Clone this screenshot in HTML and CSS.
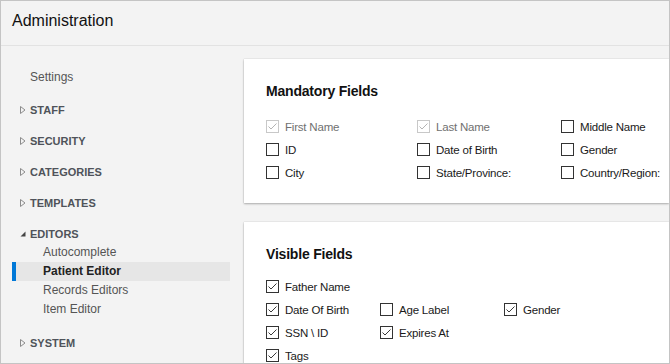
FILE: index.html
```html
<!DOCTYPE html>
<html lang="en">
  <head>
    <meta charset="UTF-8" />
    <title>Administration</title>
    <link rel="stylesheet" href="styles.css">
  </head>
  <body>
    <div class="window">
      <header class="titlebar">Administration</header>

      <div class="body">
        <nav class="sidebar">
          <div class="settings">Settings</div>

          <div class="group">
            <div class="group-head">
              <svg class="caret" viewBox="0 0 6 8"><path d="M0.5 0.5L5 4L0.5 7.5Z" /></svg>
              STAFF
            </div>
          </div>
          <div class="group">
            <div class="group-head">
              <svg class="caret" viewBox="0 0 6 8"><path d="M0.5 0.5L5 4L0.5 7.5Z" /></svg>
              SECURITY
            </div>
          </div>
          <div class="group">
            <div class="group-head">
              <svg class="caret" viewBox="0 0 6 8"><path d="M0.5 0.5L5 4L0.5 7.5Z" /></svg>
              CATEGORIES
            </div>
          </div>
          <div class="group">
            <div class="group-head">
              <svg class="caret" viewBox="0 0 6 8"><path d="M0.5 0.5L5 4L0.5 7.5Z" /></svg>
              TEMPLATES
            </div>
          </div>
          <div class="group open">
            <div class="group-head">
              <svg class="caret" viewBox="0 0 6 8"><path d="M5.5 1.5V6.5H0.5Z" /></svg>
              EDITORS
            </div>
            <ul class="sub">
              <li>Autocomplete</li>
              <li class="active">Patient Editor</li>
              <li>Records Editors</li>
              <li>Item Editor</li>
            </ul>
          </div>
          <div class="group">
            <div class="group-head">
              <svg class="caret" viewBox="0 0 6 8"><path d="M0.5 0.5L5 4L0.5 7.5Z" /></svg>
              SYSTEM
            </div>
          </div>
        </nav>

        <main class="content">
          <section class="panel mandatory">
            <h2>Mandatory Fields</h2>
            <div class="fields">
              <label class="field disabled"><span class="box"><svg viewBox="0 0 11 11"><polyline points="1.5,5.5 4,8 9.5,2.5" /></svg></span>First Name</label>
              <label class="field disabled"><span class="box"><svg viewBox="0 0 11 11"><polyline points="1.5,5.5 4,8 9.5,2.5" /></svg></span>Last Name</label>
              <label class="field"><span class="box"></span>Middle Name</label>

              <label class="field"><span class="box"></span>ID</label>
              <label class="field"><span class="box"></span>Date of Birth</label>
              <label class="field"><span class="box"></span>Gender</label>

              <label class="field"><span class="box"></span>City</label>
              <label class="field"><span class="box"></span>State/Province:</label>
              <label class="field"><span class="box"></span>Country/Region:</label>
            </div>
          </section>

          <section class="panel visible">
            <h2>Visible Fields</h2>
            <div class="fields">
              <label class="field"><span class="box"><svg viewBox="0 0 11 11"><polyline points="1.5,5.5 4,8 9.5,2.5" /></svg></span>Father Name</label>
              <span></span>
              <span></span>

              <label class="field"><span class="box"><svg viewBox="0 0 11 11"><polyline points="1.5,5.5 4,8 9.5,2.5" /></svg></span>Date Of Birth</label>
              <label class="field"><span class="box"></span>Age Label</label>
              <label class="field"><span class="box"><svg viewBox="0 0 11 11"><polyline points="1.5,5.5 4,8 9.5,2.5" /></svg></span>Gender</label>

              <label class="field"><span class="box"><svg viewBox="0 0 11 11"><polyline points="1.5,5.5 4,8 9.5,2.5" /></svg></span>SSN \ ID</label>
              <label class="field"><span class="box"><svg viewBox="0 0 11 11"><polyline points="1.5,5.5 4,8 9.5,2.5" /></svg></span>Expires At</label>
              <span></span>

              <label class="field"><span class="box"><svg viewBox="0 0 11 11"><polyline points="1.5,5.5 4,8 9.5,2.5" /></svg></span>Tags</label>
            </div>
          </section>
        </main>
      </div>
    </div>
  </body>
</html>
```

FILE: styles.css
```css
body {
  margin: 0;
  font-family: "Liberation Sans", Arial, sans-serif;
}
.window {
  width: 670px;
  height: 364px;
  box-sizing: border-box;
  border: 1px solid #c4c4c4;
  background: #f3f3f3;
  display: flex;
  flex-direction: column;
  overflow: hidden;
}
.titlebar {
  flex: none;
  height: 44px;
  line-height: 40px;
  padding: 0 11px;
  font-size: 16px;
  color: #111;
  border-bottom: 1px solid #e2e2e2;
}
.body {
  flex: 1;
  min-height: 0;
  display: flex;
}

/* sidebar */
.sidebar {
  flex: none;
  width: 243px;
  padding-top: 22px;
}
.settings {
  padding-left: 29px;
  margin-bottom: 9px;
  line-height: 18px;
  font-size: 12px;
  color: #555;
}
.group {
  padding: 6px 0 7px;
}
.group.open {
  padding-bottom: 9px;
}
.group-head {
  display: flex;
  align-items: center;
  gap: 4px;
  padding-left: 19px;
  line-height: 18px;
  font-size: 11px;
  font-weight: bold;
  color: #4f535a;
}
.caret {
  width: 6px;
  height: 8px;
  flex: none;
}
.caret path {
  fill: none;
  stroke: #8c8c8c;
  stroke-width: 1;
}
.open .caret path {
  fill: #444;
  stroke: none;
}
.sub {
  list-style: none;
  margin: 0;
  padding: 0;
}
.sub li {
  margin-left: 11px;
  width: 218px;
  box-sizing: border-box;
  border-left: 4px solid transparent;
  padding-left: 27px;
  line-height: 19px;
  font-size: 12px;
  color: #555;
}
.sub li.active {
  background: #e6e6e6;
  border-left-color: #0078d7;
  font-weight: bold;
  color: #222;
}

/* panels */
.content {
  flex: 1;
  min-width: 0;
  padding-top: 13px;
  display: flex;
  flex-direction: column;
  gap: 19px;
}
.panel {
  flex: none;
  background: #fff;
  padding: 23px 22px 19px;
  box-shadow: 0 1px 2px rgba(0, 0, 0, 0.28), 0 0 1px rgba(0, 0, 0, 0.2);
}
.panel h2 {
  margin: 0;
  font-size: 14px;
  line-height: 18px;
  font-weight: bold;
  color: #111;
  letter-spacing: -0.2px;
}
.fields {
  display: grid;
  grid-auto-rows: 23px;
}
.mandatory .fields {
  margin-top: 15px;
  grid-template-columns: 151px 144px 1fr;
}
.visible .fields {
  margin-top: 12px;
  grid-template-columns: 114px 124px 1fr;
}
.field {
  display: flex;
  align-items: center;
  gap: 6px;
  font-size: 11.5px;
  letter-spacing: -0.2px;
  color: #1a1a1a;
  white-space: nowrap;
}
.box {
  flex: none;
  width: 13px;
  height: 13px;
  box-sizing: border-box;
  border: 1px solid #333;
  display: flex;
}
.box svg {
  width: 11px;
  height: 11px;
}
.box polyline {
  fill: none;
  stroke: #3a3a3a;
  stroke-width: 1;
}
.field.disabled {
  color: #707070;
}
.disabled .box {
  border-color: #c8c8c8;
}
.disabled .box polyline {
  stroke: #b4b4b4;
}
```
